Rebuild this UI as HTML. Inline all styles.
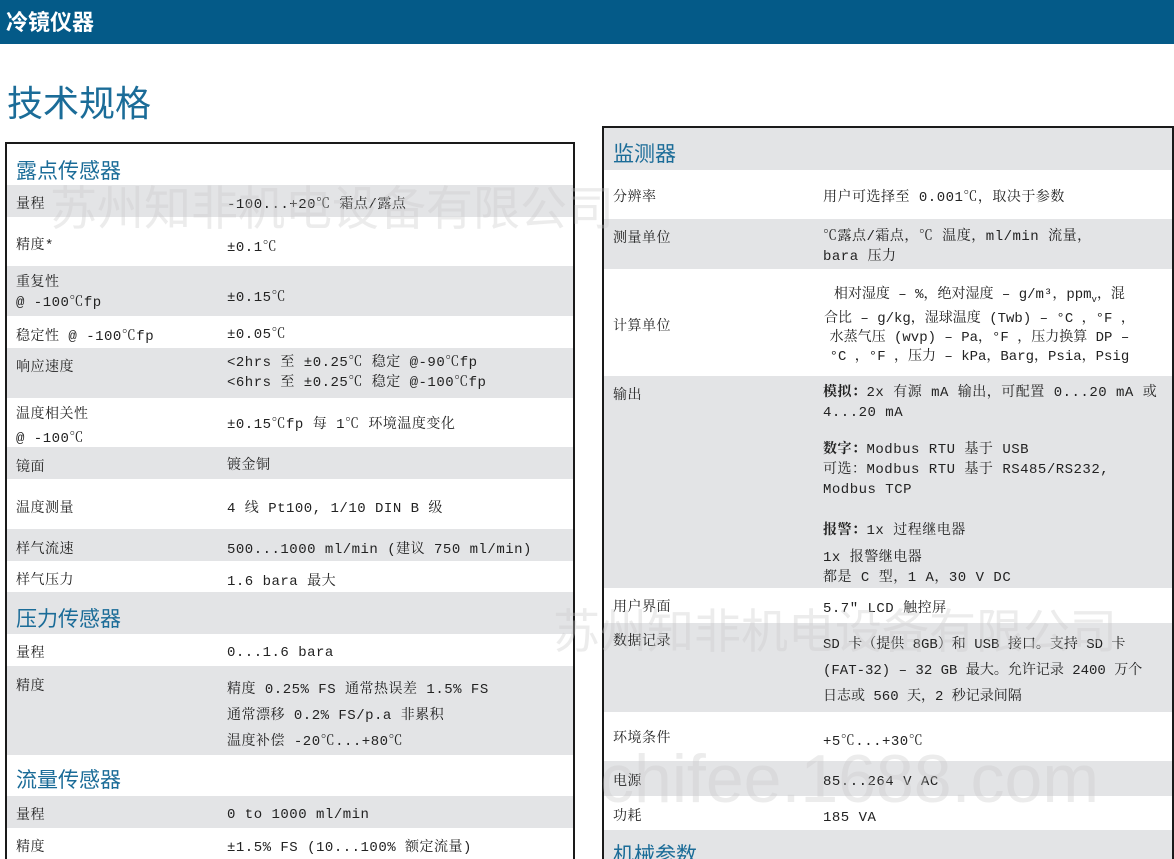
<!DOCTYPE html>
<html><head><meta charset="utf-8"><style>
html{height:859px;overflow:hidden}
body{margin:0;width:1174px;height:859px;overflow:hidden;background:#fff;position:relative;font-family:"Liberation Mono","Noto Serif CJK SC",serif;color:#222;}
.bar{position:absolute;left:0;top:0;width:1174px;height:44px;background:#045a88;}
.bar span{position:absolute;left:6px;top:5px;color:#fff;font:bold 22px "Liberation Sans","Noto Sans CJK SC",sans-serif;}
.h1{position:absolute;left:7px;top:75px;font:36px "Liberation Sans","Noto Sans CJK SC",sans-serif;color:#1b6c98;}
.box{position:absolute;border:2px solid #1a1a1a;overflow:hidden;}
.r{position:absolute;left:0;right:0;}
.g{background:#e3e4e6;}
.t{position:absolute;font-size:14px;line-height:20px;white-space:nowrap;letter-spacing:0.5px}
.tt{position:absolute;font:21px "Liberation Sans","Noto Sans CJK SC",sans-serif;color:#1b6c98;}
.wm{position:absolute;font:47px "Liberation Sans","Noto Sans CJK SC",sans-serif;color:rgba(200,200,200,0.35);white-space:nowrap;}
b{font-weight:bold}
</style></head><body>
<div class="bar"><span>冷镜仪器</span></div>
<div class="h1">技术规格</div>

<div class="box" style="left:5px;top:142px;width:566px;height:730px;">
<div class="tt" style="left:9px;top:11px">露点传感器</div>
<div class="r g" style="top:41px;height:32px"></div>
<div class="r g" style="top:122px;height:50px"></div>
<div class="r g" style="top:204px;height:50px"></div>
<div class="r g" style="top:303px;height:32px"></div>
<div class="r g" style="top:385px;height:32px"></div>
<div class="r g" style="top:448px;height:42px"></div>
<div class="r g" style="top:522px;height:89px"></div>
<div class="r g" style="top:652px;height:32px"></div>
<div class="t" style="left:9px;top:51px">量程</div><div class="t" style="left:220px;top:51px">-100...+20℃ 霜点/露点</div>
<div class="t" style="left:9px;top:92px">精度*</div><div class="t" style="left:220px;top:94px">±0.1℃</div>
<div class="t" style="left:9px;top:129px">重复性<br>@ -100℃fp</div><div class="t" style="left:220px;top:144px">±0.15℃</div>
<div class="t" style="left:9px;top:183px">稳定性 @ -100℃fp</div><div class="t" style="left:220px;top:181px">±0.05℃</div>
<div class="t" style="left:9px;top:214px">响应速度</div><div class="t" style="left:220px;top:209px">&lt;2hrs 至 ±0.25℃ 稳定 @-90℃fp<br>&lt;6hrs 至 ±0.25℃ 稳定 @-100℃fp</div>
<div class="t" style="left:9px;top:259px;line-height:24px">温度相关性<br>@ -100℃</div><div class="t" style="left:220px;top:271px">±0.15℃fp 每 1℃ 环境温度变化</div>
<div class="t" style="left:9px;top:314px">镜面</div><div class="t" style="left:220px;top:312px">镀金铜</div>
<div class="t" style="left:9px;top:355px">温度测量</div><div class="t" style="left:220px;top:355px">4 线 Pt100, 1/10 DIN B 级</div>
<div class="t" style="left:9px;top:396px">样气流速</div><div class="t" style="left:220px;top:396px">500...1000 ml/min (建议 750 ml/min)</div>
<div class="t" style="left:9px;top:427px">样气压力</div><div class="t" style="left:220px;top:428px">1.6 bara 最大</div>
<div class="tt" style="left:9px;top:459px">压力传感器</div>
<div class="t" style="left:9px;top:500px">量程</div><div class="t" style="left:220px;top:499px">0...1.6 bara</div>
<div class="t" style="left:9px;top:533px">精度</div><div class="t" style="left:220px;top:533px;line-height:26px">精度 0.25% FS 通常热误差 1.5% FS<br>通常漂移 0.2% FS/p.a 非累积<br>温度补偿 -20℃...+80℃</div>
<div class="tt" style="left:9px;top:620px">流量传感器</div>
<div class="t" style="left:9px;top:662px">量程</div><div class="t" style="left:220px;top:661px">0 to 1000 ml/min</div>
<div class="t" style="left:9px;top:694px">精度</div><div class="t" style="left:220px;top:694px">±1.5% FS (10...100% 额定流量)</div>
</div>

<div class="box" style="left:602px;top:126px;width:568px;height:750px;">
<div class="r g" style="top:0;height:42px"></div>
<div class="r g" style="top:91px;height:50px"></div>
<div class="r g" style="top:248px;height:212px"></div>
<div class="r g" style="top:495px;height:89px"></div>
<div class="r g" style="top:633px;height:35px"></div>
<div class="r g" style="top:702px;height:60px"></div>
<div class="tt" style="left:9px;top:10px">监测器</div>
<div class="t" style="left:9px;top:60px">分辨率</div><div class="t" style="left:219px;top:60px">用户可选择至 0.001℃，取决于参数</div>
<div class="t" style="left:9px;top:101px">测量单位</div><div class="t" style="left:219px;top:99px">℃露点/霜点，℃ 温度，ml/min 流量，<br>bara 压力</div>
<div class="t" style="left:9px;top:189px">计算单位</div><div class="t" style="left:220px;top:158px;line-height:19px;text-align:center;letter-spacing:0">相对湿度 – %，绝对湿度 – g/m³，ppm<sub style="font-size:9px">v</sub>，混<br>合比 – g/kg，湿球温度 (Twb) – °C ，°F ，<br>水蒸气压 (wvp) – Pa，°F ，压力换算 DP –<br>°C ，°F ，压力 – kPa，Barg，Psia，Psig</div>
<div class="t" style="left:9px;top:258px">输出</div>
<div class="t" style="left:219px;top:255px"><b>模拟：</b>2x 有源 mA 输出，可配置 0...20 mA 或<br>4...20 mA</div>
<div class="t" style="left:219px;top:312px"><b>数字：</b>Modbus RTU 基于 USB<br>可选：Modbus RTU 基于 RS485/RS232,<br>Modbus TCP</div>
<div class="t" style="left:219px;top:393px"><b>报警：</b>1x 过程继电器</div>
<div class="t" style="left:219px;top:420px">1x 报警继电器<br>都是 C 型，1 A，30 V DC</div>
<div class="t" style="left:9px;top:470px">用户界面</div><div class="t" style="left:219px;top:471px">5.7″ LCD 触控屏</div>
<div class="t" style="left:9px;top:504px">数据记录</div><div class="t" style="left:219px;top:504px;line-height:26px;letter-spacing:0">SD 卡（提供 8GB）和 USB 接口。支持 SD 卡<br>(FAT-32) – 32 GB 最大。允许记录 2400 万个<br>日志或 560 天，2 秒记录间隔</div>
<div class="t" style="left:9px;top:601px">环境条件</div><div class="t" style="left:219px;top:604px">+5℃...+30℃</div>
<div class="t" style="left:9px;top:644px">电源</div><div class="t" style="left:219px;top:644px">85...264 V AC</div>
<div class="t" style="left:9px;top:679px">功耗</div><div class="t" style="left:219px;top:680px">185 VA</div>
<div class="tt" style="left:9px;top:711px">机械参数</div>
</div>

<div class="wm" style="left:50px;top:170px">苏州知非机电设备有限公司</div>
<div class="wm" style="left:553px;top:593px">苏州知非机电设备有限公司</div>
<div class="wm" style="left:600px;top:740px;font-size:68px">chifee.1688.com</div>
</body></html>
